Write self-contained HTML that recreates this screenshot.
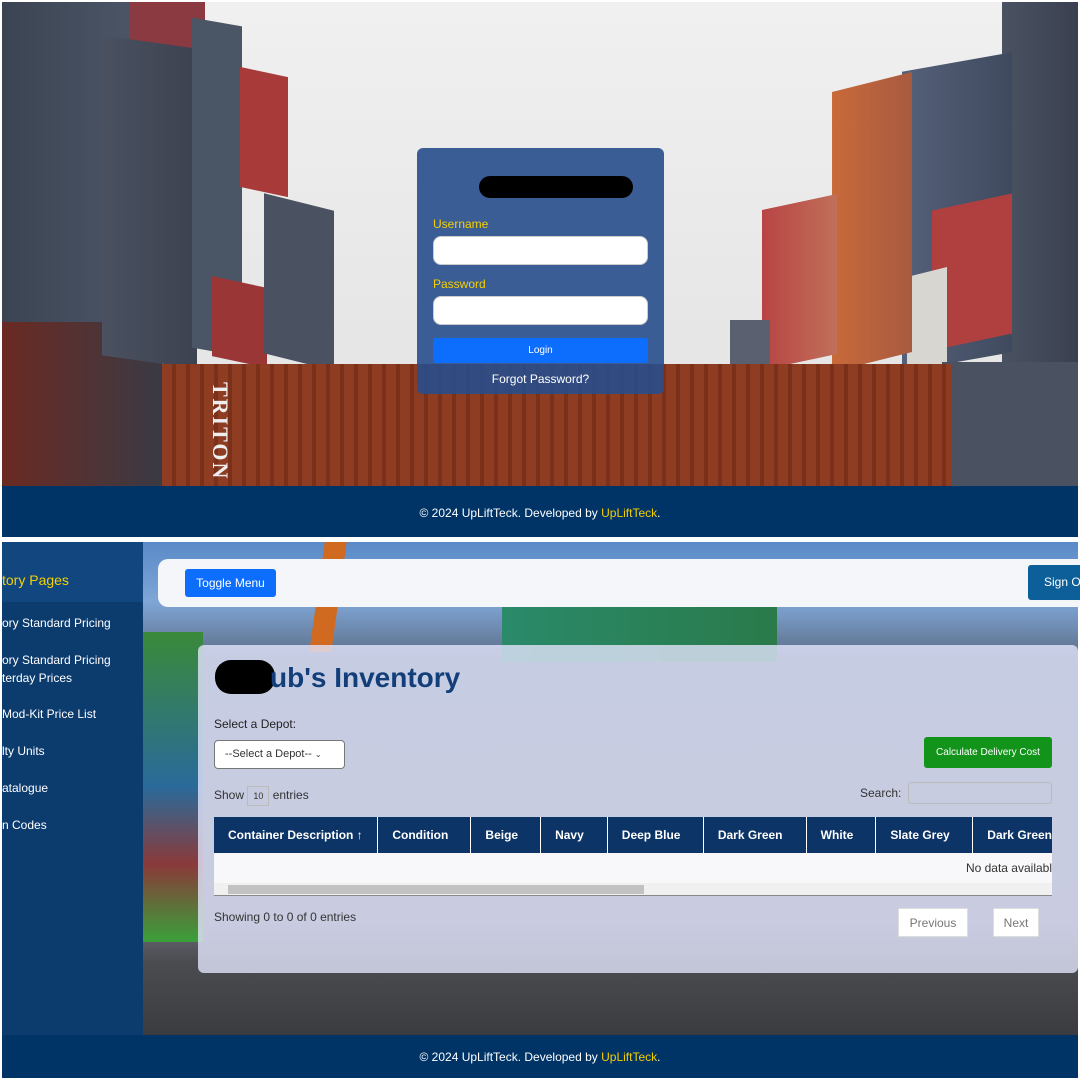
<!DOCTYPE html>
<html><head><meta charset="utf-8"><style>
*{margin:0;padding:0;box-sizing:border-box}
body{width:1080px;height:1080px;background:#fff;font-family:"Liberation Sans",sans-serif;position:relative;overflow:hidden}
.a{position:absolute}
</style></head><body>
<!-- TOP SECTION -->
<div class="a" style="left:2px;top:2px;width:1076px;height:484px;background:linear-gradient(#f0f0f0,#e2e2e2);overflow:hidden">
  <!-- left stacks -->
  <div class="a" style="left:0;top:0;width:130px;height:484px;background:linear-gradient(90deg,#3b4452,#4b5566)"></div>
  <div class="a" style="left:0;top:320px;width:160px;height:164px;background:linear-gradient(90deg,#6a2a22,#3a3a44)"></div>
  <div class="a" style="left:128px;top:0;width:75px;height:90px;background:#8a3a40"></div>
  <div class="a" style="left:100px;top:40px;width:95px;height:320px;background:linear-gradient(90deg,#4a5160,#3c4250);transform:skewY(8deg)"></div>
  <div class="a" style="left:190px;top:20px;width:50px;height:330px;background:#4a5566;transform:skewY(10deg)"></div>
  <div class="a" style="left:238px;top:70px;width:48px;height:120px;background:#a83a3a;transform:skewY(12deg)"></div>
  <div class="a" style="left:210px;top:280px;width:55px;height:80px;background:#9a3636;transform:skewY(12deg)"></div>
  <div class="a" style="left:262px;top:200px;width:70px;height:160px;background:#4a5262;transform:skewY(14deg)"></div>
  <!-- right stacks -->
  <div class="a" style="left:1000px;top:0;width:76px;height:484px;background:linear-gradient(90deg,#4a5262,#3a4050)"></div>
  <div class="a" style="left:900px;top:60px;width:110px;height:300px;background:linear-gradient(90deg,#55607a,#3f4a5e);transform:skewY(-10deg)"></div>
  <div class="a" style="left:930px;top:200px;width:80px;height:140px;background:#b04040;transform:skewY(-12deg)"></div>
  <div class="a" style="left:905px;top:270px;width:40px;height:110px;background:#d8d6d0;transform:skewY(-14deg)"></div>
  <div class="a" style="left:830px;top:80px;width:80px;height:280px;background:linear-gradient(90deg,#c86a3a,#a85a40);transform:skewY(-14deg)"></div>
  <div class="a" style="left:760px;top:200px;width:75px;height:160px;background:linear-gradient(90deg,#b84444,#c0705a);transform:skewY(-12deg)"></div>
  <div class="a" style="left:728px;top:318px;width:40px;height:45px;background:#5a6070"></div>
  <div class="a" style="left:940px;top:360px;width:136px;height:124px;background:#4a5262"></div>
  <!-- big container -->
  <div class="a" style="left:160px;top:362px;width:790px;height:123px;background:repeating-linear-gradient(90deg,#8e3c22 0 10px,#7a3019 10px 14px)"></div>
  <div class="a" style="left:205px;top:380px;color:#eee;font:bold 22px 'Liberation Serif',serif;writing-mode:vertical-rl;letter-spacing:2px">TRITON</div>
</div>
<div class="a" style="left:2px;top:486px;width:1076px;height:51px;background:#003366;color:#fff;font-size:12px;text-align:center;line-height:54px">© 2024 UpLiftTeck. Developed by <span style="color:#f5d000">UpLiftTeck</span>.</div>
<!-- login -->
<div class="a" style="left:417px;top:148px;width:247px;height:246px;background:rgba(40,78,140,0.9);border-radius:6px">
  <div class="a" style="left:62px;top:28px;width:154px;height:22px;background:#000;border-radius:11px"></div>
  <div class="a" style="left:16px;top:69px;color:#f5d000;font-size:12px">Username</div>
  <div class="a" style="left:16px;top:88px;width:215px;height:29px;background:#fff;border-radius:8px;border:1px solid #ccc"></div>
  <div class="a" style="left:16px;top:129px;color:#f5d000;font-size:12px">Password</div>
  <div class="a" style="left:16px;top:148px;width:215px;height:29px;background:#fff;border-radius:8px;border:1px solid #ccc"></div>
  <div class="a" style="left:16px;top:190px;width:215px;height:25px;background:#0d6efd;border-radius:3px;color:#fff;font-size:10px;text-align:center;line-height:25px">Login</div>
  <div class="a" style="left:0;top:224px;width:247px;text-align:center;color:#fff;font-size:12px">Forgot Password?</div>
</div>
<!-- BOTTOM SECTION -->
<div class="a" style="left:2px;top:542px;width:1076px;height:493px;background:linear-gradient(#5a8ac8 0,#7fa6d6 60px,#5a6a80 120px,#6a6a78 380px,#4a4c50 420px,#3a3c40 493px);overflow:hidden">
  <div class="a" style="left:141px;top:90px;width:60px;height:310px;background:linear-gradient(#3a8a3a,#2a6a9a 50%,#8a3a3a 75%,#3aa03a)"></div>
  <div class="a" style="left:500px;top:60px;width:275px;height:60px;background:linear-gradient(90deg,#2a8a6a,#2a7a4a)"></div>
  <div class="a" style="left:315px;top:0;width:22px;height:110px;background:#d06a20;transform:skewX(-8deg)"></div>
</div>
<div class="a" style="left:2px;top:542px;width:141px;height:493px;background:#0c3b6e"></div>
<div class="a" style="left:2px;top:542px;width:141px;height:60px;background:#12467e"></div>
<div class="a" style="left:2px;top:572px;color:#f5d000;font-size:14px">tory Pages</div>
<div class="a" style="left:2px;top:614px;color:#fff;font-size:12px;line-height:18px">ory Standard Pricing</div>
<div class="a" style="left:2px;top:651px;color:#fff;font-size:12px;line-height:18px">ory Standard Pricing<br>terday Prices</div>
<div class="a" style="left:2px;top:707px;color:#fff;font-size:12px">Mod-Kit Price List</div>
<div class="a" style="left:2px;top:744px;color:#fff;font-size:12px">lty Units</div>
<div class="a" style="left:2px;top:781px;color:#fff;font-size:12px">atalogue</div>
<div class="a" style="left:2px;top:818px;color:#fff;font-size:12px">n Codes</div>
<!-- top nav -->
<div class="a" style="left:158px;top:559px;width:922px;height:48px;background:#f4f6fa;border-radius:10px 0 0 10px"></div>
<div class="a" style="left:185px;top:569px;width:91px;height:28px;background:#0d6efd;border-radius:3px;color:#fff;font-size:12px;text-align:center;line-height:28px">Toggle Menu</div>
<div class="a" style="left:1028px;top:565px;width:52px;height:35px;background:#0d5f99;border-radius:3px 0 0 3px;color:#fff;font-size:12px;line-height:35px;padding-left:16px;white-space:nowrap;overflow:hidden">Sign Out</div>
<!-- content card -->
<div class="a" style="left:198px;top:645px;width:880px;height:328px;background:rgba(222,226,248,0.82);border-radius:6px"></div>
<div class="a" style="left:215px;top:660px;width:60px;height:34px;background:#000;border-radius:16px"></div>
<div class="a" style="left:270px;top:662px;color:#123f7a;font-size:28px;font-weight:bold">ub's Inventory</div>
<div class="a" style="left:214px;top:717px;color:#222;font-size:12px">Select a Depot:</div>
<div class="a" style="left:214px;top:740px;width:131px;height:29px;background:#fff;border:1px solid #777;border-radius:4px;color:#333;font-size:11px;line-height:27px;padding-left:10px">--Select a Depot-- <span style="font-size:8px">⌄</span></div>
<div class="a" style="left:924px;top:737px;width:128px;height:31px;background:#12931a;border-radius:3px;color:#fff;font-size:10px;text-align:center;line-height:31px">Calculate Delivery Cost</div>
<div class="a" style="left:214px;top:786px;color:#333;font-size:12px">Show <span style="display:inline-block;width:22px;height:20px;border:1px solid #bbb;font-size:9px;text-align:center;line-height:18px;vertical-align:middle">10</span> entries</div>
<div class="a" style="left:860px;top:786px;color:#333;font-size:12px">Search:</div>
<div class="a" style="left:908px;top:782px;width:144px;height:22px;border:1px solid #bbb;border-radius:3px"></div>
<!-- table -->
<div class="a" style="left:214px;top:817px;width:838px;height:36px;background:#0c3466;color:#fff;font-size:12px;font-weight:bold;display:flex;line-height:36px;overflow:hidden;white-space:nowrap">
  <div style="width:168px;padding-left:14px;border-right:1px solid #fff">Container Description ↑</div>
  <div style="width:95px;padding-left:14px;border-right:1px solid #fff">Condition</div>
  <div style="width:71px;padding-left:14px;border-right:1px solid #fff">Beige</div>
  <div style="width:68px;padding-left:14px;border-right:1px solid #fff">Navy</div>
  <div style="width:98px;padding-left:14px;border-right:1px solid #fff">Deep Blue</div>
  <div style="width:105px;padding-left:14px;border-right:1px solid #fff">Dark Green</div>
  <div style="width:71px;padding-left:14px;border-right:1px solid #fff">White</div>
  <div style="width:99px;padding-left:14px;border-right:1px solid #fff">Slate Grey</div>
  <div style="padding-left:14px">Dark Green</div>
</div>
<div class="a" style="left:214px;top:853px;width:838px;height:30px;background:#f8f8fa;color:#333;font-size:12px;text-align:right;line-height:30px;overflow:hidden;white-space:nowrap">No data availabl</div>
<div class="a" style="left:214px;top:883px;width:838px;height:13px;background:#f0f0f0;border-bottom:1px solid #888"></div>
<div class="a" style="left:228px;top:885px;width:416px;height:9px;background:#c2c2c2"></div>
<div class="a" style="left:214px;top:910px;color:#333;font-size:12px">Showing 0 to 0 of 0 entries</div>
<div class="a" style="left:898px;top:908px;width:70px;height:29px;background:#fff;border:1px solid #ddd;color:#777;font-size:12px;text-align:center;line-height:28px">Previous</div>
<div class="a" style="left:993px;top:908px;width:46px;height:29px;background:#fff;border:1px solid #ddd;color:#777;font-size:12px;text-align:center;line-height:28px">Next</div>
<div class="a" style="left:2px;top:1035px;width:1076px;height:43px;background:#003366;color:#fff;font-size:12px;text-align:center;line-height:44px">© 2024 UpLiftTeck. Developed by <span style="color:#f5d000">UpLiftTeck</span>.</div>
</body></html>
